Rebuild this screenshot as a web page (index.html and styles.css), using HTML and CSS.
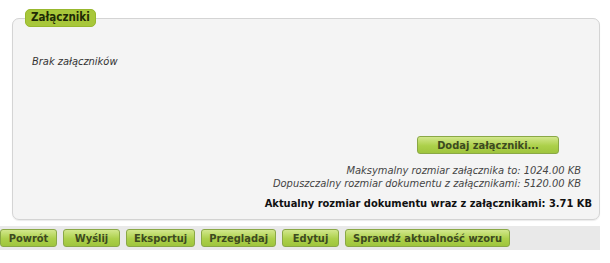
FILE: index.html
```html
<!DOCTYPE html>
<html lang="pl">
<head>
<meta charset="utf-8">
<link rel="stylesheet" href="styles.css">
</head>
<body>
<div class="page">
  <fieldset class="panel">
    <legend class="legend">Załączniki</legend>
    <p class="empty">Brak załączników</p>
    <div class="add-row"><button class="btn btn-add">Dodaj załączniki...</button></div>
    <div class="limits">
      <p>Maksymalny rozmiar załącznika to: 1024.00 KB</p>
      <p>Dopuszczalny rozmiar dokumentu z załącznikami: 5120.00 KB</p>
    </div>
    <p class="total">Aktualny rozmiar dokumentu wraz z załącznikami: 3.71 KB</p>
  </fieldset>
  <div class="toolbar">
    <button class="btn">Powrót</button>
    <button class="btn">Wyślij</button>
    <button class="btn">Eksportuj</button>
    <button class="btn">Przeglądaj</button>
    <button class="btn">Edytuj</button>
    <button class="btn">Sprawdź aktualność wzoru</button>
  </div>
</div>
</body>
</html>
```
FILE: styles.css
```css
* { box-sizing: border-box; }
html, body { margin: 0; padding: 0; background: #fff; }
body {
  font-family: "DejaVu Sans Condensed", "DejaVu Sans", sans-serif;
  font-size: 11px;
  color: #333;
  width: 610px;
  height: 263px;
  overflow: hidden;
}
.page { width: 600px; }
.panel {
  margin: 9px 0 0 12px;
  width: 588px;
  height: 211px;
  border: 1px solid #d4d4d4;
  border-radius: 7px;
  background: #f4f4f4;
  padding: 0 18px 0 19px;
  box-shadow: 0 1px 1px rgba(0,0,0,0.08);
}
.legend {
  background: #a8c73a;
  color: #1f2a05;
  font-weight: bold;
  font-size: 11.5px;
  padding: 1px 5px 2px;
  border-radius: 5px;
  margin-left: -7px;
  line-height: 13px;
  border: 1px solid #98b82e;
}
.empty {
  margin: 28px 0 0 0;
  font-style: italic;
  color: #333;
}
.add-row {
  display: flex;
  justify-content: flex-end;
  margin-top: 68px;
  padding-right: 22px;
}
.btn {
  font-family: inherit;
  font-weight: bold;
  font-size: 11px;
  color: #3d4a1f;
  background: linear-gradient(#d2e78c, #acd04a 55%, #9fc53d);
  border: 1px solid #8aa846;
  border-radius: 3px;
  height: 18px;
  padding: 0 7px;
  min-width: 57px;
  line-height: 15px;
  cursor: pointer;
}
.btn-add { width: 142px; }
.limits {
  margin-top: 10px;
  text-align: right;
  font-style: italic;
  color: #444;
}
.limits p { margin: 0; line-height: 13px; }
.total {
  margin: 7px -11px 0 0;
  text-align: right;
  font-weight: bold;
  color: #111;
}
.toolbar {
  margin-top: 6px;
  background: #e9e9e9;
  height: 24px;
  display: flex;
  align-items: center;
  gap: 6px;
}
```
